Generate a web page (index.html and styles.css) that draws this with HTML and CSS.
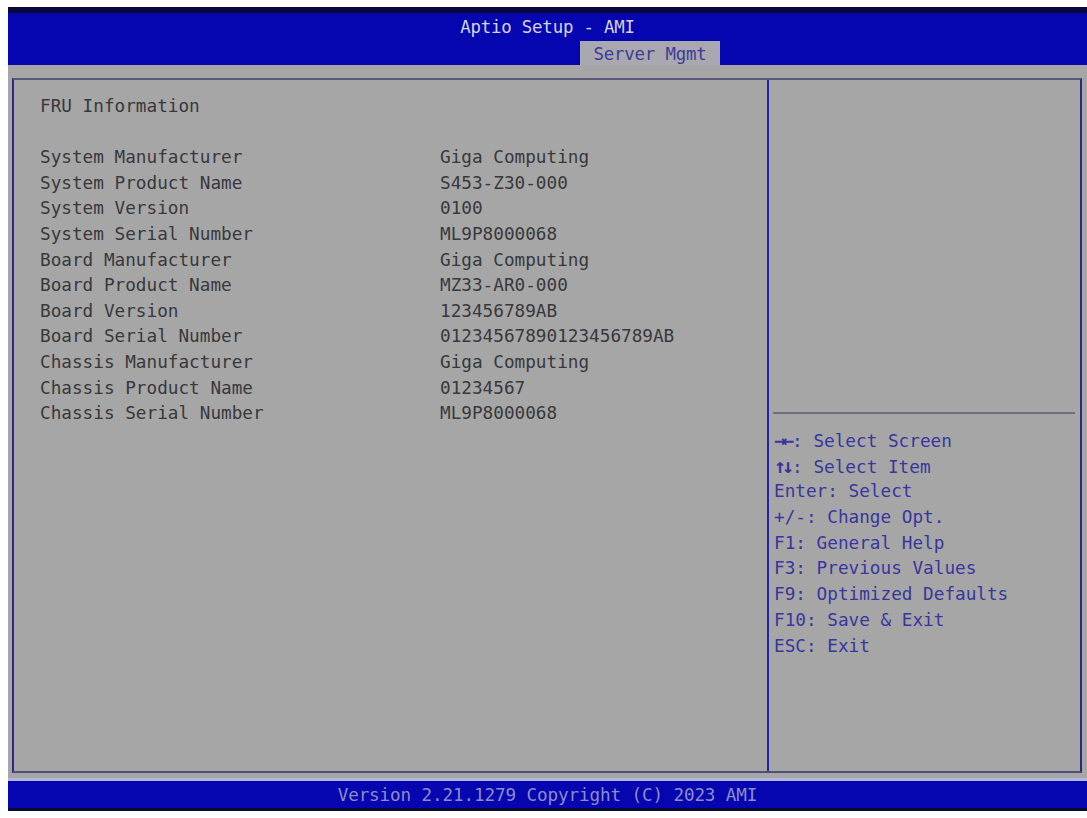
FILE: index.html
```html
<!DOCTYPE html>
<html>
<head>
<meta charset="utf-8">
<link rel="stylesheet" href="styles.css">
</head>
<body>
<div class="screen">
  <div class="header">
    <div class="title">Aptio Setup - AMI</div>
    <div class="tabs"><div class="tab">Server Mgmt</div></div>
  </div>
  <div class="body">
    <div class="box">
      <div class="main">
        <div class="row heading">FRU Information</div>
        <div class="row blank"></div>
        <div class="row"><span class="label">System Manufacturer</span><span class="value">Giga Computing</span></div>
        <div class="row"><span class="label">System Product Name</span><span class="value">S453-Z30-000</span></div>
        <div class="row"><span class="label">System Version</span><span class="value">0100</span></div>
        <div class="row"><span class="label">System Serial Number</span><span class="value">ML9P8000068</span></div>
        <div class="row"><span class="label">Board Manufacturer</span><span class="value">Giga Computing</span></div>
        <div class="row"><span class="label">Board Product Name</span><span class="value">MZ33-AR0-000</span></div>
        <div class="row"><span class="label">Board Version</span><span class="value">123456789AB</span></div>
        <div class="row"><span class="label">Board Serial Number</span><span class="value">01234567890123456789AB</span></div>
        <div class="row"><span class="label">Chassis Manufacturer</span><span class="value">Giga Computing</span></div>
        <div class="row"><span class="label">Chassis Product Name</span><span class="value">01234567</span></div>
        <div class="row"><span class="label">Chassis Serial Number</span><span class="value">ML9P8000068</span></div>
      </div>
      <div class="side">
        <div class="side-top"></div>
        <div class="help">
          <div class="hline"><span class="arr">→←</span>: Select Screen</div>
          <div class="hline"><span class="arr">↑↓</span>: Select Item</div>
          <div class="hline">Enter: Select</div>
          <div class="hline">+/-: Change Opt.</div>
          <div class="hline">F1: General Help</div>
          <div class="hline">F3: Previous Values</div>
          <div class="hline">F9: Optimized Defaults</div>
          <div class="hline">F10: Save &amp; Exit</div>
          <div class="hline">ESC: Exit</div>
        </div>
      </div>
    </div>
  </div>
  <div class="footer">Version 2.21.1279 Copyright (C) 2023 AMI</div>
</div>
</body>
</html>
```
FILE: styles.css
```css
html, body {
  margin: 0;
  padding: 0;
  background: #ffffff;
}
body {
  font-family: "DejaVu Sans Mono", "Liberation Mono", monospace;
  font-size: 17.7px;
}
.screen {
  margin-left: 8px;
  margin-top: 7px;
  width: 1079px;
  display: flex;
  flex-direction: column;
}
.header {
  height: 52px;
  background: #0606b0;
  border-top: 6px solid #0a0a3a;
  display: flex;
  flex-direction: column;
  align-items: center;
}
.title {
  color: #d4d4e4;
  font-size: 17.4px;
  line-height: 20px;
  margin-top: 4px;
  letter-spacing: -0.2px;
}
.tabs {
  width: 100%;
  display: flex;
  margin-top: 4px;
  padding-left: 572px;
  box-sizing: border-box;
}
.tab {
  width: 140px;
  height: 24px;
  background: #a8a8ae;
  color: #3c3c98;
  text-align: center;
  font-size: 17.4px;
  line-height: 26px;
  letter-spacing: -0.2px;
}
.body {
  background: #a6a6a6;
  height: 716px;
  padding: 13px 5px 8px 4px;
  box-sizing: border-box;
  border-bottom: 3px solid #b4b4dc;
}
.box {
  height: 695px;
  display: flex;
  border-top: 2px solid #585878;
  border-left: 2px solid #2a2a90;
  border-right: 2px solid #2a2a80;
  border-bottom: 2px solid #505078;
  box-sizing: border-box;
}
.main {
  width: 755px;
  border-right: 2px solid #2424a0;
  padding: 14px 0 0 26px;
  box-sizing: border-box;
  color: #38383c;
}
.row {
  height: 25.6px;
  line-height: 25.6px;
  display: flex;
  white-space: pre;
}
.label {
  width: 400px;
}
.side {
  flex: 1;
  display: flex;
  flex-direction: column;
  padding: 0 5px 0 4px;
}
.side-top {
  height: 332px;
  border-bottom: 2px solid #6c6c84;
}
.help {
  padding-top: 14px;
  padding-left: 1px;
  color: #36369e;
}
.hline {
  height: 25.7px;
  line-height: 25.7px;
  white-space: pre;
}
.arr {
  font-weight: bold;
  font-size: 20px;
  letter-spacing: -4px;
  margin-right: 2px;
}
.footer {
  height: 27px;
  background: #0606b0;
  border-bottom: 3px solid #0a0a30;
  color: #8c8cc8;
  text-align: center;
  line-height: 29px;
  font-size: 17.6px;
  letter-spacing: -0.1px;
}
```
